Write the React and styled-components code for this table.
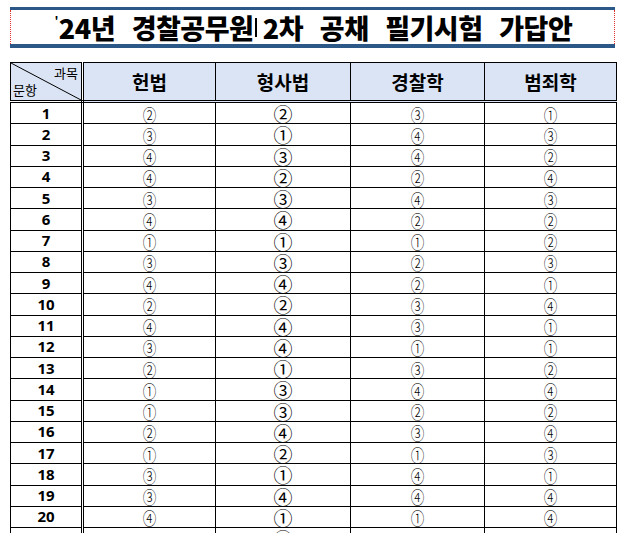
import React from 'react';
import styled, { createGlobalStyle } from 'styled-components';

const Global = createGlobalStyle`
  html, body { margin: 0; padding: 0; background: #fff; overflow: hidden; }
  body { font-family: "Noto Sans CJK KR", "Noto Sans", sans-serif; color: #000; }
`;

const Page = styled.div`
  width: 624px;
  box-sizing: border-box;
  padding: 7px 8px 0 10px;
`;

const TitleBar = styled.div`
  width: 605px;
  border-top: 3px solid #2c5888;
  border-bottom: 4px solid #2c5888;
`;

const TitleInner = styled.div`
  height: 34px;
  box-sizing: border-box;
  border-left: 1px dotted #e03030;
  border-right: 1px dotted #e03030;
  display: flex;
  align-items: center;
  justify-content: center;
`;

const TitleText = styled.h1`
  margin: 0 0 0 2px;
  font-family: "Noto Sans CJK KR", sans-serif;
  font-weight: 900;
  font-size: 27px;
  line-height: 1;
  letter-spacing: -0.5px;
  word-spacing: 11px;
  white-space: nowrap;
  display: flex;
  align-items: center;
`;

const Apos = styled.span`
  font-size: 10px;
  align-self: flex-start;
  margin-right: 1px;
  margin-top: 1px;
`;

const Caret = styled.span`
  display: inline-block;
  width: 1.5px;
  height: 19px;
  background: #000;
  margin: 0 6px 0 2px;
`;

const Table = styled.table`
  margin-top: 14px;
  border-collapse: collapse;
  table-layout: fixed;
  width: 606px;
  border: 1px solid #000;
`;

const HeadCell = styled.th`
  height: 37px;
  padding: 0;
  background: #dbe4f4;
  border: 1px solid #000;
  border-bottom: 3px double #000;
  font-weight: 700;
  font-size: 19px;
  text-align: center;
  vertical-align: middle;
  ${p => p.$first && 'border-right: 3px double #000; position: relative;'}
`;

const Diag = styled.svg`
  position: absolute;
  inset: 0;
  width: 100%;
  height: 100%;
`;

const CornerTop = styled.span`
  position: absolute;
  top: 0px;
  right: 3px;
  font-size: 13px;
  font-weight: 400;
`;

const CornerBottom = styled.span`
  position: absolute;
  bottom: 1px;
  left: 2px;
  font-size: 13px;
  font-weight: 400;
`;

const Cell = styled.td`
  height: 20.25px;
  padding: 0;
  border: 1px solid #000;
  text-align: center;
  vertical-align: middle;
  line-height: 1;
  ${p => p.$first && `
    border-right: 3px double #000;
    font-family: "Noto Sans", sans-serif;
    font-weight: 700;
    font-size: 15px;
  `}
`;

const Circled = styled.span`
  display: inline-block;
  font-family: "Noto Sans CJK KR", sans-serif;
  font-size: ${p => (p.$big ? '19px' : '17px')};
  font-weight: ${p => (p.$big ? 400 : 300)};
  transform: ${p => (p.$big ? 'none' : 'scaleX(0.8)')};
  line-height: 1;
  vertical-align: middle;
`;

const subjects = ['헌법', '형사법', '경찰학', '범죄학'];

const answers = [
  [2, 2, 3, 1],
  [3, 1, 4, 3],
  [4, 3, 4, 2],
  [4, 2, 2, 4],
  [3, 3, 4, 3],
  [4, 4, 2, 2],
  [1, 1, 1, 2],
  [3, 3, 2, 3],
  [4, 4, 2, 1],
  [2, 2, 3, 4],
  [4, 4, 3, 1],
  [3, 4, 1, 1],
  [2, 1, 3, 2],
  [1, 3, 4, 4],
  [1, 3, 2, 2],
  [2, 4, 3, 4],
  [1, 2, 1, 3],
  [3, 1, 4, 1],
  [3, 4, 4, 4],
  [4, 1, 1, 4],
];

const glyph = n => (n ? '①②③④⑤'[n - 1] : '');

export default function App() {
  return (
    <>
      <Global />
      <Page>
        <TitleBar>
          <TitleInner>
            <TitleText>
              <Apos>'</Apos>24년 경찰공무원<Caret />2차 공채 필기시험 가답안
            </TitleText>
          </TitleInner>
        </TitleBar>
        <Table>
          <colgroup>
            <col style={{ width: 72 }} />
            <col style={{ width: 133 }} />
            <col style={{ width: 135 }} />
            <col style={{ width: 134 }} />
            <col style={{ width: 132 }} />
          </colgroup>
          <thead>
            <tr>
              <HeadCell $first>
                <Diag preserveAspectRatio="none" viewBox="0 0 100 100">
                  <line x1="0" y1="0" x2="100" y2="100" stroke="#000" strokeWidth="1" vectorEffect="non-scaling-stroke" />
                </Diag>
                <CornerTop>과목</CornerTop>
                <CornerBottom>문항</CornerBottom>
              </HeadCell>
              {subjects.map(s => (
                <HeadCell key={s}>{s}</HeadCell>
              ))}
            </tr>
          </thead>
          <tbody>
            {answers.map((row, i) => (
              <tr key={i}>
                <Cell $first>{i + 1}</Cell>
                {row.map((a, j) => (
                  <Cell key={j}>
                    <Circled $big={j === 1}>{glyph(a)}</Circled>
                  </Cell>
                ))}
              </tr>
            ))}
            <tr>
              <Cell $first />
              <Cell />
              <Cell>
                <Circled $big>②</Circled>
              </Cell>
              <Cell />
              <Cell />
            </tr>
          </tbody>
        </Table>
      </Page>
    </>
  );
}
